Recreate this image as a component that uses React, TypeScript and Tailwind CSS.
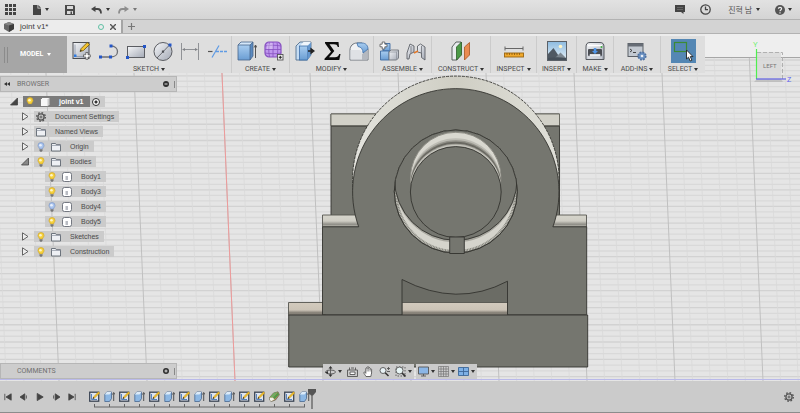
import React from "react";

const Caret = ({ color = "#333" }: { color?: string }) => (
  <svg width="4" height="3" viewBox="0 0 4 3" className="shrink-0">
    <path d="M0 0h4L2 3z" fill={color} />
  </svg>
);

/* ---------- toolbar icons ---------- */

const Defs = () => (
  <svg width="0" height="0" className="absolute">
    <defs>
      <linearGradient id="steel" x1="0" y1="0" x2="1" y2="1">
        <stop offset="0" stopColor="#f6f7f9" />
        <stop offset="1" stopColor="#a3a9b5" />
      </linearGradient>
      <linearGradient id="sky" x1="0" y1="0" x2="0" y2="1">
        <stop offset="0" stopColor="#a9cdf0" />
        <stop offset="1" stopColor="#6a9dd3" />
      </linearGradient>
      <linearGradient id="photo" x1="0" y1="0" x2="0" y2="1">
        <stop offset="0" stopColor="#8dbbe0" />
        <stop offset="1" stopColor="#e8f1f7" />
      </linearGradient>
    </defs>
  </svg>
);

const Icon = ({ size = 20, children }: { size?: number; children: React.ReactNode }) => (
  <svg width={size} height={size} viewBox="0 0 20 20" fill="none" className="shrink-0">
    {children}
  </svg>
);

const SketchIcon = () => (
  <Icon>
    <rect x="1" y="1.500" width="16" height="16" fill="url(#steel)" stroke="#4b4d52" />
    <path d="M3 3.500v12h12" stroke="#8a93a3" strokeWidth=".8" />
    <rect x="2" y="13.500" width="2.500" height="2.500" fill="#2f7be0" />
    <path d="M8 10.500 9.200 7.500l6-6 2.300 2-6 6z" fill="#f2c230" stroke="#6b5310" strokeWidth=".8" />
    <path d="m8 10.500.8-1.700 1 1z" fill="#222" />
    <path d="M13.800 11.500h2.200v2.300h2.300v2.200H16v2.300h-2.200V16h-2.300v-2.200h2.300z" fill="#fff" stroke="#555" strokeWidth=".8" />
  </Icon>
);

const LineArcIcon = () => (
  <Icon>
    <path d="M1 16h11c4 0 6.500-2.500 6.500-5.500S16 5 12 5" stroke="#6d6f73" strokeWidth="1.300" />
    <rect x="0" y="14.500" width="3" height="3" fill="#2456c7" />
    <rect x="10" y="14.500" width="3" height="3" fill="#2456c7" />
    <rect x="10.500" y="3.500" width="3" height="3" fill="#2456c7" />
  </Icon>
);

const RectIcon = () => (
  <Icon>
    <rect x="1.500" y="5.500" width="17" height="11" fill="url(#steel)" stroke="#5b5d62" />
    <rect x="0" y="15" width="3" height="3" fill="#2456c7" />
    <rect x="17" y="4" width="3" height="3" fill="#2456c7" />
  </Icon>
);

const CircleIcon = () => (
  <Icon>
    <circle cx="10" cy="10.500" r="9" fill="url(#steel)" stroke="#5b5d62" />
    <path d="M4 17 16.500 4" stroke="#5b5d62" strokeWidth=".9" />
    <rect x="8.900" y="9.500" width="2.200" height="2.200" fill="#4b4d52" />
    <rect x="15.500" y="2.500" width="3" height="3" fill="#2456c7" />
  </Icon>
);

const DimensionIcon = () => (
  <Icon>
    <path d="M1.500 2v17M18.500 2v17M3 8.500h14" stroke="#909296" />
    <path d="m2 8.500 3-1.500v3zM18 8.500l-3-1.500v3z" fill="#808286" />
  </Icon>
);

const TrimIcon = () => (
  <Icon>
    <path d="M1 10.500h4.500" stroke="#555" strokeWidth="1.200" />
    <path d="m5 16.500 7-12" stroke="#5f9be4" strokeWidth="1.200" />
    <path d="M9 10.500h11" stroke="#5f9be4" strokeWidth="1.400" strokeDasharray="3 1" />
  </Icon>
);

const ExtrudeIcon = () => (
  <Icon>
    <path d="m1 4 3-3h12v14l-3 4H1z" fill="#5a8ac0" />
    <path d="m1 4 3-3h12l-3 3z" fill="#d4e7f9" />
    <rect x="1" y="4" width="12" height="15" fill="url(#sky)" />
    <path d="m1 4 3-3h12v14l-3 4H1zh12l3-3M13 4v15" stroke="#46658a" strokeWidth=".8" />
    <path d="M18.500 17V5M17.200 6.500l1.300-2.500 1.300 2.500" stroke="#444" strokeWidth=".9" />
  </Icon>
);

const FormIcon = () => (
  <Icon>
    <path d="M1 5c0-2 2-4 4-4h8c2 0 4 2 4 4v7c0 2-2 4-4 4H5c-2 0-4-2-4-4z" fill="#bf97ee" stroke="#8750c0" strokeWidth="1.200" />
    <path d="M5.500 1.500C4.500 6 4.500 11 5.500 16M9 1v15M13 1.500c1 4.500 1 9.500 0 14M1 5c5-1 11-1 16 0M1 8.500h16M1 12c5 1 11 1 16 0" stroke="#8750c0" strokeWidth=".8" />
    <path d="M3 4c2-2 4-2 6-2v6H3z" fill="#fff" fillOpacity=".3" />
    <rect x="13.500" y="13.500" width="5.500" height="5.500" fill="#eee" stroke="#555" strokeWidth=".9" />
    <path d="M14.800 16.300h3M16.300 14.800v3" stroke="#222" />
  </Icon>
);

const PressPullIcon = () => (
  <Icon>
    <path d="m1 5 4-4h11v13l-4 5H1z" fill="#c5dcf3" stroke="#54708f" strokeWidth=".9" />
    <path d="m5 5 3.500-4H16l-4 4z" fill="#f0f6fc" />
    <rect x="4.500" y="5" width="8" height="14" fill="url(#sky)" stroke="#3d6ea8" strokeWidth=".8" />
    <path d="M12.500 5 16 1.500V14l-3.500 5z" fill="#6496cd" />
    <path d="M13 10h4M16 7.800l3 2.200-3 2.200z" stroke="#222" strokeWidth="1.300" fill="#222" />
  </Icon>
);

const SigmaIcon = () => (
  <Icon>
    <path d="M3 1h13.500l.5 5h-1.200c-.6-2.200-1.500-2.800-4-2.800H7.500L12.300 10 7 16.200h6c2.300 0 3.400-.8 4.200-3.200h1.300L17.300 19H2.500v-1.200L9 10.700 3 2.200z" fill="#0b0b0b" />
  </Icon>
);

const FilletIcon = () => (
  <Icon>
    <path d="M1 19V9c0-4 3-7 7-7h5l6 6v11z" fill="#f1f2f4" stroke="#6f747c" />
    <path d="M1.500 18.500V9H10c2 0 3 2 3 4v5.500z" fill="#dfe1e5" />
    <path d="M13 18.500V13l5.500-5v10.500z" fill="#b4b8bf" />
    <path d="M8 2h5c4 0 6 3 6 6l-5 4c0-4-2-6-5-6.500z" fill="url(#sky)" stroke="#3d6ea8" strokeWidth=".8" />
  </Icon>
);

const ComponentIcon = () => (
  <Icon>
    <path d="M4 2.500h7V10H4z" fill="url(#sky)" stroke="#3f6ca1" strokeWidth=".9" />
    <path d="M1.500 10h8.500v9H1.500z" fill="url(#sky)" stroke="#3f6ca1" strokeWidth=".9" />
    <path d="m10 11 2-2h7.500v8l-2 2H10z" fill="url(#steel)" stroke="#6f747c" strokeWidth=".9" />
    <path d="M10 11h7.500l2-2M17.500 11v8" stroke="#8a8f98" strokeWidth=".7" />
    <path d="M3.200 1h2.600v2.200H8v2.600H5.800V8H3.200V5.800H1V3.200h2.200z" fill="#fff" stroke="#555" strokeWidth=".8" />
  </Icon>
);

const JointIcon = () => (
  <Icon>
    <path d="M1 18V12l3-9 4 2v6l-4 2-1 5z" fill="url(#steel)" stroke="#5d6168" strokeWidth=".9" />
    <path d="m11.500 5 3-2L19 6v13l-3.500-2.500V12l-4-1z" fill="url(#steel)" stroke="#5d6168" strokeWidth=".9" />
    <path d="M5 5v7M15.500 5v7" stroke="#6c7077" strokeWidth=".8" />
    <path d="m8 12 4-2" stroke="#e4792a" strokeWidth="1.400" />
  </Icon>
);

const PlaneIcon = () => (
  <Icon>
    <path d="m1 6 4-5h5v12l-4 6H1z" fill="#e9ecef" stroke="#4d5552" strokeWidth=".9" />
    <path d="m5.500 6 5-5v13l-5 5z" fill="#4a9a46" stroke="#2c5f2a" strokeWidth=".8" />
    <path d="m13.500 6 5-4.500V14l-5 5z" fill="#e98b50" stroke="#a4541f" strokeWidth=".8" />
  </Icon>
);

const MeasureIcon = () => (
  <Icon>
    <path d="M1 7.500h18M1 5.500v4M19 5.500v4" stroke="#666" />
    <rect x=".5" y="12" width="19" height="4" fill="#f0a92d" stroke="#9a6511" strokeWidth=".9" />
    <path d="M3 12v2M5.500 12v2M8 12v2M10.500 12v2M13 12v2M15.500 12v2" stroke="#7b4f0a" strokeWidth=".7" />
  </Icon>
);

const PhotoIcon = () => (
  <Icon>
    <rect x=".5" y=".5" width="19" height="19" fill="url(#photo)" stroke="#5b6168" />
    <circle cx="13.500" cy="5.500" r="1.800" fill="#fff6c9" />
    <path d="m1 13 5.500-6 8 12H1z" fill="#4f5963" />
    <path d="m8 17 5.500-5.500L19 17v2H8z" fill="#7d8790" />
    <path d="M1 17c6-1 12-1 18 0v2H1z" fill="#46505a" />
  </Icon>
);

const PrintIcon = () => (
  <Icon>
    <path d="M1 6c0-3 1-4.500 4-4.500h10c3 0 4 1.500 4 4.500v12.500H1z" fill="url(#steel)" stroke="#55585e" />
    <path d="M3 4.500h14" stroke="#fff" strokeWidth="1.500" />
    <circle cx="16.500" cy="6" r="1" fill="#3fae3f" />
    <rect x="3" y="8" width="14" height="7" rx="1" fill="#4a4d53" />
    <path d="M8.800 7h2.500v3h1.700l-3 3-3-3h1.800z" fill="#4f94e6" />
    <path d="M5 13.500h10v1.500H5zM3 17h14" fill="#eceef1" stroke="#eceef1" strokeWidth=".8" />
  </Icon>
);

const ScriptIcon = () => (
  <Icon>
    <rect x="1" y="2.500" width="15" height="13" fill="#c3c9d1" stroke="#5b6067" />
    <path d="M1 2.500h15v3H1z" fill="#666c75" />
    <path d="m3 8 2 1.500L3 11M6 11.500h3" stroke="#333" strokeWidth=".9" />
    <circle cx="15" cy="15" r="3.700" fill="#6c93c4" stroke="#4f71a0" strokeWidth="1.800" strokeDasharray="1.800 1.100" />
    <circle cx="15" cy="15" r="1.300" fill="#e8eef6" />
  </Icon>
);

const SelectIcon = () => (
  <svg width="25" height="24" viewBox="0 0 25 24" fill="none" className="shrink-0">
    <rect x="3.500" y="3.500" width="12" height="9" stroke="#3c8b35" strokeWidth="1.200" />
    <path d="M15.500 11v9l2-1.800 1.700 3.800 1.700-.8-1.600-3.600h2.700z" fill="#fff" stroke="#222" strokeWidth=".9" />
  </svg>
);

const groups = [
  { label: "SKETCH", width: "w-[165px]", icons: [SketchIcon, LineArcIcon, RectIcon, CircleIcon, DimensionIcon, TrimIcon] },
  { label: "CREATE", width: "w-[58px]", icons: [ExtrudeIcon, FormIcon] },
  { label: "MODIFY", width: "w-[84px]", icons: [PressPullIcon, SigmaIcon, FilletIcon] },
  { label: "ASSEMBLE", width: "w-[58px]", icons: [ComponentIcon, JointIcon] },
  { label: "CONSTRUCT", width: "w-[59px]", icons: [PlaneIcon] },
  { label: "INSPECT", width: "w-[46px]", icons: [MeasureIcon] },
  { label: "INSERT", width: "w-[40px]", icons: [PhotoIcon] },
  { label: "MAKE", width: "w-[37px]", icons: [PrintIcon] },
  { label: "ADD-INS", width: "w-[47px]", icons: [ScriptIcon] },
];

const Toolbar = () => (
  <div className="flex h-[37px] w-max bg-[#dedede] font-[Roboto,sans-serif] text-[7px]">
    <button className="flex w-[67px] items-center gap-1 bg-[#a6a6a6] pl-1 font-bold text-white">
      <span className="h-4 w-1 border-x border-[#8b8b8b]" />
      <span className="ml-2">MODEL</span>
      <Caret color="#fff" />
    </button>
    {groups.map((g) => (
      <div key={g.label} className={`flex flex-col items-center border-r border-[#cbcbcb] pt-[3px] ${g.width}`}>
        <div className="flex h-6 items-center gap-[7px]">
          {g.icons.map((I, i) => (
            <button key={i} aria-label={`${g.label} ${i + 1}`}>
              <I />
            </button>
          ))}
        </div>
        <button className="mt-[2px] flex items-center gap-[2px] leading-[8px] text-[#4c4c4c]">
          {g.label}
          <Caret />
        </button>
      </div>
    ))}
    <div className="flex w-[44px] flex-col items-center pt-[3px]">
      <button aria-label="Select tool" className="h-6 bg-[#5487b4]">
        <SelectIcon />
      </button>
      <button className="mt-[2px] flex items-center gap-[2px] leading-[8px] text-[#4c4c4c]">
        SELECT
        <Caret />
      </button>
    </div>
  </div>
);

/* ---------- header ---------- */

const Header = () => (
  <header className="flex h-5 items-center justify-between border-b border-[#b2b2b2] bg-linear-to-b from-[#e2e2e2] to-[#d4d4d4] pl-[5px] pr-2">
    <div className="flex items-center gap-4">
      <button aria-label="Data panel">
        <svg width="11" height="11" viewBox="0 0 11 11" fill="#444">
          {[0, 4, 8].map((y) => [0, 4, 8].map((x) => <rect key={`${x}${y}`} x={x} y={y} width="3" height="3" />))}
        </svg>
      </button>
      <button aria-label="File" className="flex items-center gap-1">
        <svg width="9" height="10" viewBox="0 0 9 10" fill="#444">
          <path d="M1 0h4.500v3.500H9V10H1zM6.300 0 9 2.700H6.300z" />
        </svg>
        <Caret />
      </button>
      <button aria-label="Save">
        <svg width="10" height="10" viewBox="0 0 10 10">
          <path d="M0 0h9l1 1v9H0z" fill="#4a4a4a" />
          <path d="M2 1h6v3H2zM2 6h6v3H2z" fill="#dadada" />
          <path d="M5.500 6.500H7V9H5.500z" fill="#4a4a4a" />
        </svg>
      </button>
      <div className="flex items-center gap-2">
        <button aria-label="Undo" className="flex items-center gap-1">
          <svg width="11" height="8" viewBox="0 0 11 8" fill="none">
            <path d="M3 3h3.500C9 3 10 4.500 10 7.500" stroke="#444" strokeWidth="1.800" />
            <path d="M0 3 4.500 0v6z" fill="#444" />
          </svg>
          <Caret />
        </button>
        <button aria-label="Redo" className="flex items-center gap-1">
          <svg width="11" height="8" viewBox="0 0 11 8" fill="none">
            <path d="M8 3H4.500C2 3 1 4.500 1 7.500" stroke="#8d8d8d" strokeWidth="1.800" />
            <path d="M11 3 6.500 0v6z" fill="#8d8d8d" />
          </svg>
          <Caret color="#777" />
        </button>
      </div>
    </div>
    <div className="flex items-center gap-[15px]">
      <button aria-label="Feedback">
        <svg width="10" height="9" viewBox="0 0 10 9">
          <path d="M0 0h10v7H8.500v2L6 7H0z" fill="#444" />
          <path d="M2 2.500h6M2 4.500h6" stroke="#777" strokeWidth=".7" />
        </svg>
      </button>
      <button aria-label="Job status">
        <svg width="11" height="11" viewBox="0 0 11 11" fill="none" stroke="#444" strokeWidth="1.300">
          <circle cx="5.500" cy="5.500" r="4.700" />
          <path d="M5.500 2.500v3.200H8" />
        </svg>
      </button>
      <button className="ml-[2px] flex items-center gap-1 font-['Noto_Sans_CJK_KR',sans-serif] text-[8px] leading-[12px] text-[#555]">
        진혁 남
        <Caret />
      </button>
      <button aria-label="Help" className="flex items-center gap-[3px]">
        <svg width="10" height="10" viewBox="0 0 10 10" fill="none">
          <circle cx="5" cy="5" r="5" fill="#555" />
          <path d="M3.400 3.800c0-2 3.200-2 3.200 0C6.600 5 5 4.900 5 6.200M5 7.200v1.200" stroke="#eee" strokeWidth="1.200" />
        </svg>
        <Caret />
      </button>
    </div>
  </header>
);

const Tabs = () => (
  <nav className="flex h-[14px] border-b border-[#b2b2b2] bg-[#d3d3d3]">
    <div className="flex w-[123px] items-center border-r-2 border-[#a5a5a5] bg-[#ececec] pl-1 pr-[5px]">
      <svg width="10" height="10" viewBox="0 0 10 10">
        <path d="m0 2 5-2 5 2v5l-5 3-5-3z" fill="#666" />
        <path d="m0 2 5-2 5 2-5 1.500z" fill="#858585" />
        <path d="M5 3.500 10 2v5l-5 3z" fill="#3d3d3d" />
      </svg>
      <a href="#joint" className="ml-[6px] text-[8px] leading-[12px] text-[#3c3c3c]">
        joint v1*
      </a>
      <span className="ml-auto size-[6px] rounded-full border border-[#5fc0a4]" />
      <button aria-label="Close tab" className="ml-[6px]">
        <svg width="6" height="6" viewBox="0 0 6 6" stroke="#555" strokeWidth="1.400">
          <path d="m0 0 6 6M6 0 0 6" />
        </svg>
      </button>
    </div>
    <button aria-label="New tab" className="ml-[5px]">
      <svg width="7" height="7" viewBox="0 0 7 7" stroke="#777" strokeWidth="1.200">
        <path d="M3.500 0v7M0 3.500h7" />
      </svg>
    </button>
  </nav>
);

/* ---------- browser tree ---------- */

const Bulb = ({ off }: { off?: boolean }) => (
  <svg width="10" height="10" viewBox="0 0 10 10" className="shrink-0">
    <path d="M5 .5a3 3 0 0 1 3 3c0 1.500-1.300 2-1.500 3.500h-3C3.300 5.500 2 5 2 3.500a3 3 0 0 1 3-3z" fill={off ? "#a9c4ee" : "#f6d23c"} stroke={off ? "#7c97c4" : "#d0a52a"} strokeWidth=".7" />
    <circle cx="4.500" cy="3.300" r="1.300" fill="#fff" fillOpacity=".75" />
    <path d="M3.500 7.200h3v1.500L5.700 9.800H4.300l-.8-1.100z" fill="#777" />
  </svg>
);

const Folder = () => (
  <svg width="10" height="10" viewBox="0 0 10 10" className="shrink-0">
    <path d="M.5 1.500h4l.8 1.200h4.200V9H.5z" fill="#eef0f4" stroke="#5f6671" strokeWidth=".9" />
    <path d="M.5 3.500h9" stroke="#8c93a0" strokeWidth=".7" />
  </svg>
);

const BodyIcon = () => (
  <svg width="10" height="10" viewBox="0 0 10 10" className="shrink-0">
    <rect x=".5" y=".5" width="9" height="9" rx="2" fill="#fff" stroke="#666b75" strokeWidth=".9" />
    <path d="M3.500 4H6v4H3.500z" fill="#b9bcc3" />
  </svg>
);

const CubeIcon = () => (
  <svg width="10" height="10" viewBox="0 0 10 10" className="shrink-0">
    <path d="m.5 2.500 2-2h7v7l-2 2h-7z" fill="#f7f7f7" stroke="#555" strokeWidth=".6" />
    <path d="M7.500 9.500v-7l2-2v7z" fill="#c9c9c9" />
  </svg>
);

const Gear = () => (
  <svg width="10" height="10" viewBox="0 0 10 10" fill="none" stroke="#555" className="shrink-0">
    <circle cx="5" cy="5" r="3.100" strokeWidth="1.300" />
    <circle cx="5" cy="5" r="4.300" strokeWidth="1.400" strokeDasharray="1.600 1.777" />
    <circle cx="5" cy="5" r="1" strokeWidth=".9" />
  </svg>
);

const Arrow = ({ open, dark }: { open?: boolean; dark?: boolean }) => (
  <svg width="8" height="9" viewBox="0 0 8 9" className="shrink-0">
    {open ? (
      <path d="M7.500 1v7h-7z" fill={dark ? "#444" : "#888"} stroke="#444" strokeWidth=".8" />
    ) : (
      <path d="M1.500.8v7.400L7 4.500z" fill="#eee" stroke="#555" strokeWidth=".9" />
    )}
  </svg>
);

const rows = [
  { name: "Document Settings", icon: Gear },
  { name: "Named Views", icon: Folder },
  { name: "Origin", icon: Folder, bulb: "off" },
  { name: "Bodies", icon: Folder, bulb: "on", open: true },
  { name: "Body1", icon: BodyIcon, bulb: "on", leaf: true },
  { name: "Body3", icon: BodyIcon, bulb: "on", leaf: true },
  { name: "Body4", icon: BodyIcon, bulb: "off", leaf: true },
  { name: "Body5", icon: BodyIcon, bulb: "on", leaf: true },
  { name: "Sketches", icon: Folder, bulb: "on" },
  { name: "Construction", icon: Folder, bulb: "on" },
];

const PanelBar = ({ title, collapse, plus }: { title: string; collapse?: boolean; plus?: boolean }) => (
  <div className="flex h-4 w-[177px] items-center border border-[#b6b6b6] bg-[#cdcdcd] pr-px font-[Roboto,sans-serif] text-[7px] text-[#707070]">
    <span className="flex w-4 justify-center">
      {collapse && (
        <svg width="6" height="4" viewBox="0 0 6 4" fill="#333" className="-ml-1">
          <path d="M3 0v4L0 2zM6 0v4L3 2z" />
        </svg>
      )}
    </span>
    <span>{title}</span>
    <button aria-label={`${title} options`} className="ml-auto">
      <svg width="6" height="6" viewBox="0 0 6 6">
        <circle cx="3" cy="3" r="3" fill="#2e2e2e" />
        <path d={plus ? "M3 1.500v3M1.500 3h3" : "M1.500 3h3"} stroke="#ddd" strokeWidth="1" />
      </svg>
    </button>
    <span className="ml-1 h-[7px] w-[2px] border-r border-[#888]" />
  </div>
);

const Browser = () => (
  <aside className="mt-[3px] w-[177px]">
    <PanelBar title="BROWSER" collapse />
    <ul className="pt-[2px] text-[7px] leading-[11px] text-[#4a4a4a]">
      <li className="flex h-[15px] items-center pl-[10px]">
        <Arrow open dark />
        <div className="ml-[5px] flex h-[11px] items-center bg-[#cbcbcb]">
          <div className="flex h-full w-[67px] items-center bg-[#7b7b7b] pl-[2px]">
            <Bulb />
            <span className="ml-[5px] flex">
              <CubeIcon />
            </span>
            <span className="ml-[9px] font-bold text-white">joint v1</span>
          </div>
          <label className="flex pl-[2px] pr-[5px]">
            <input
              type="radio"
              defaultChecked
              aria-label="Activate joint v1"
              className="size-2 appearance-none rounded-full border border-[#333] bg-[radial-gradient(circle,#333_1px,#fff_2px)]"
            />
          </label>
        </div>
      </li>
      {rows.map((r) => {
        const I = r.icon;
        return (
          <li key={r.name} className={r.leaf ? "flex h-[15px] items-center pl-[45px]" : "flex h-[15px] items-center gap-[5px] pl-[21px]"}>
            {!r.leaf && <Arrow open={r.open} />}
            <div className="flex h-[11px] items-center gap-[5px] bg-[#cbcbcb] pl-[2px] pr-[5px]">
              {r.bulb && <Bulb off={r.bulb === "off"} />}
              <I />
              <span className="ml-1">{r.name}</span>
            </div>
          </li>
        );
      })}
    </ul>
  </aside>
);

/* ---------- 3D viewport ---------- */

const horizontals = Array.from({ length: 58 }, (_, i) => 60 + i * 5.3 + i * i * 0.0045);
const verticals = Array.from({ length: 49 }, (_, i) => i - 4);

const Scene = () => (
  <svg className="absolute inset-0 size-full" viewBox="0 34 800 347" preserveAspectRatio="xMidYMid slice">
    <defs>
      <linearGradient id="ledge" x1="0" y1="0" x2="0" y2="1">
        <stop offset="0" stopColor="#d6d5cc" />
        <stop offset=".5" stopColor="#cfcdc4" />
        <stop offset=".78" stopColor="#8f8e87" />
        <stop offset="1" stopColor="#c4c3ba" />
      </linearGradient>
      <linearGradient id="ledgeWarm" x1="0" y1="0" x2="0" y2="1">
        <stop offset="0" stopColor="#d3cbbe" />
        <stop offset=".6" stopColor="#cbc3b6" />
        <stop offset=".85" stopColor="#7b766d" />
        <stop offset="1" stopColor="#b5afa4" />
      </linearGradient>
      <linearGradient id="rim" x1="0" y1="0" x2="1" y2="0">
        <stop offset="0" stopColor="#e3e3dd" />
        <stop offset=".5" stopColor="#cfcec4" />
        <stop offset="1" stopColor="#e0e0d9" />
      </linearGradient>
      <clipPath id="pinBack">
        <circle cx="455.800" cy="177.500" r="45.200" />
      </clipPath>
      <clipPath id="bore">
        <circle cx="455.800" cy="191.500" r="61.500" />
      </clipPath>
    </defs>

    <rect y="34" width="800" height="347" fill="#e5e5e5" />
    <rect y="34" width="800" height="23" fill="#eeeeee" />
    {horizontals.map((y, i) => (
      <path key={i} d={`M0 ${y}H800`} stroke={i % 3 === 0 ? "#d2d2d2" : "#d9d9d9"} strokeWidth="1.300" />
    ))}
    {verticals.map((n) => (
      <path
        key={n}
        d={`M${45.3 + n * 17.6} 57L${59 + n * 17.6} 381`}
        stroke={n % 5 === 0 ? "#c0c0c0" : "#d9d9d9"}
        strokeWidth={n % 5 === 0 ? 1 : 0.8}
      />
    ))}
    <path d="M0 57.500H800" stroke="#a6a6a6" />
    <path d="M221.300 57 235 381" stroke="#ee9a9a" />
    <path d="M0 379.500H800" stroke="#b9b9ea" />

    <g stroke="#33332f" strokeWidth=".9" fill="#75766f">
      {/* rear block */}
      <path d="M331 114h228.500v102H331z" />
      <path d="M331 114h228.500v12H331z" fill="#d2d1c8" stroke="#66665f" />
      <path d="M331 126h228.500" />
      {/* ledges */}
      <path d="M322.500 215H362v12h-39.500zM550 215h36.500v12H550z" fill="url(#ledge)" stroke="#55554f" />
      <path d="M288.500 302.500H325V315h-36.500z" fill="url(#ledgeWarm)" stroke="#55554f" />
      <path d="M402 278h106v25H402z" fill="#6b6c65" stroke="none" />
      <path d="M402 302.500h106V315H402z" fill="url(#ledgeWarm)" stroke="#55554f" />
      {/* round housing */}
      <circle cx="455.800" cy="179.300" r="103.200" fill="url(#rim)" strokeDasharray="3 1" />
      <path d="M322.500 226.800h36.200A103.200 103.200 0 1 1 552.900 226.800h33.800V314.800H507.500V281.200Q457 308 402 279.500V314.800H322.500z" />
      {/* base */}
      <path d="M288.700 315h299v52h-299z" />
      {/* bore */}
      <circle cx="455.800" cy="191.500" r="61.500" fill="#d5d4cc" />
      <g clipPath="url(#bore)">
        <circle cx="455.800" cy="191.500" r="60" fill="none" stroke="#85857d" strokeWidth="3" strokeDasharray="1 .6" />
        <circle cx="455.800" cy="181" r="61.300" fill="#a9a8a0" stroke="none" />
        <circle cx="455.800" cy="179" r="61.300" />
      </g>
      <circle cx="455.800" cy="191.500" r="61.500" fill="none" />
      {/* pin */}
      <circle cx="455.800" cy="177.500" r="45.200" fill="#d9d8d0" stroke="#8b8a82" />
      <g clipPath="url(#pinBack)" stroke="none">
        <circle cx="455.800" cy="184" r="45.800" fill="#bdbcb4" />
        <circle cx="455.800" cy="186" r="45.800" fill="#94938b" />
        <circle cx="455.800" cy="187.500" r="45.800" fill="#6a6962" />
        <circle cx="455.800" cy="189.500" r="45.800" fill="#a3a29a" />
        <circle cx="455.800" cy="190.500" r="45.800" fill="#c6c5bd" />
      </g>
      <circle cx="455.800" cy="192" r="45.400" />
      <path d="M449.700 237h14.600v16.500h-14.600z" />
    </g>
  </svg>
);

const ViewCube = () => (
  <svg width="54" height="45" viewBox="0 0 54 45" fill="none" className="absolute right-0 top-[4px]">
    <rect x="10" y="14" width="25" height="27" fill="#d9d9d9" fillOpacity=".85" />
    <path d="M11 41h24l2 3H8z" fill="#999" fillOpacity=".4" />
    <path d="M11 14.500h25.500v26.500" stroke="#b0b0b0" strokeDasharray="4 2" />
    <path d="M10.500 11v30" stroke="#4fef4f" strokeWidth="1.200" />
    <path d="M10 41h30" stroke="#6161e6" strokeWidth="1.200" />
    <text x="7" y="9" className="fill-[#62ef62] text-[7px]">Y</text>
    <text x="41" y="44" className="fill-[#5c5cf0] text-[7px]">Z</text>
    <text x="17" y="30" className="fill-[#777] font-[Roboto,sans-serif] text-[6px]">LEFT</text>
  </svg>
);

/* ---------- bottom navigation ---------- */

const NavButton = ({ label, caret, children }: { label: string; caret?: boolean; children: React.ReactNode }) => (
  <button aria-label={label} className="flex items-center gap-[2px]">
    <svg width="11" height="11" viewBox="0 0 11 11" fill="none" stroke="#555" strokeWidth=".9">
      {children}
    </svg>
    {caret && <Caret />}
  </button>
);

const NavBar = () => (
  <div className="flex gap-[2px] justify-self-center">
    <div className="flex h-[15px] items-center gap-[5px] bg-[#cbcbcb] px-[2px]">
      <NavButton label="Orbit" caret>
        <ellipse cx="5.500" cy="6" rx="5" ry="2" />
        <path d="M5.500 1v9" />
        <path d="m5.500 0 2 2.500h-4zM5.500 11l2-2.500h-4zM0 6.500l3-1.500v3z" fill="#333" stroke="none" />
      </NavButton>
      <NavButton label="Look at">
        <path d="M.5 4h10v6.500H.5zM2.500 4V1.500M8.500 4V1.500M4 2h3" />
        <path d="M3 6h5v2.500H3z" fill="#fff" />
      </NavButton>
      <NavButton label="Pan">
        <path d="M3 10.500C2 8.500.8 7.500.8 6.500c.6-.8 1.400 0 2 .8V2.500c.3-.9 1.200-.9 1.400 0V1.300c.3-1 1.300-1 1.500 0v1c.3-.9 1.300-.8 1.500 0v1c.4-.7 1.300-.6 1.400.2V7c0 1.500-.8 2.200-.8 3.500z" fill="#fff" />
        <path d="M4.200 2.500v3M5.700 2v3.500M7.200 3v2.500" strokeWidth=".6" />
      </NavButton>
      <NavButton label="Zoom">
        <circle cx="4" cy="4.500" r="3" fill="#e8f2f5" />
        <path d="m6.200 6.700 3.300 3.300" stroke="#333" strokeWidth="1.600" />
        <path d="M8 2.500h3M9.500 1v3M8 5.500h3" />
      </NavButton>
      <NavButton label="Fit" caret>
        <path d="M1 1h9v9H1z" strokeDasharray="1.500 1.500" />
        <circle cx="4.500" cy="4.500" r="3.500" fill="#e8f5f5" />
        <path d="m7 7 3.500 3.500" stroke="#333" strokeWidth="1.700" />
      </NavButton>
    </div>
    <div className="flex h-[15px] items-center gap-[3px] bg-[#cbcbcb] px-[2px]">
      <NavButton label="Display settings" caret>
        <path d="M.5 1h10v7H.5z" fill="#8bb6e6" />
        <path d="M3 10h5M5.500 8v2" />
      </NavButton>
      <NavButton label="Grid settings" caret>
        <path d="M.5.5h10v10H.5zM3 .5v10M5.500.5v10M8 .5v10M.5 3h10M.5 5.500h10M.5 8h10" strokeWidth=".7" stroke="#777" />
      </NavButton>
      <NavButton label="Viewports" caret>
        <path d="M.5 1.500h10v8H.5z" fill="#7db0e6" stroke="#3c6699" />
        <path d="M5.500 1.500v8M.5 5.500h10" stroke="#3c6699" />
      </NavButton>
    </div>
  </div>
);

/* ---------- timeline ---------- */

const StepSketch = () => (
  <svg width="11" height="11" viewBox="0 0 11 11">
    <rect x=".7" y="1.200" width="9" height="9" fill="#dfe6f0" stroke="#3c4654" strokeWidth="1.300" />
    <path d="M2.500 3v5.500H8" fill="none" stroke="#4a78b8" strokeWidth=".9" />
    <path d="m4 7.500.8-2L9.500.8l1.300 1.200L6 6.800z" fill="#f0bd2c" stroke="#b58a20" strokeWidth=".4" />
    <path d="m3.500 8 .8-1.900 1.200 1.200z" fill="#222" />
  </svg>
);

const StepExtrude = () => (
  <svg width="11" height="11" viewBox="0 0 11 11">
    <path d="m.8 3.500 2-2.500h4.700v6.500l-2 3H.8z" fill="#8db8e4" stroke="#47688f" strokeWidth=".8" />
    <path d="m.8 3.500 2-2.500h4.700l-2 2.500z" fill="#dcebf9" />
    <path d="M9.700 10V2.500M8.500 3.500l1.200-2 1.200 2" fill="none" stroke="#333" strokeWidth=".8" />
  </svg>
);

const StepPlane = () => (
  <svg width="11" height="11" viewBox="0 0 11 11">
    <path d="M.6 6.500 4.500 2 9 .8l1.400 3L6.500 9l-4.300 1.500L.6 9z" fill="#c98a5b" stroke="#5d6650" strokeWidth=".7" />
    <path d="M.8 6.500 4.700 2 8.500 1 4 6.500z" fill="#6fae62" />
    <path d="M.8 6.700H4l1.500 1.500-3.200 2L.8 9z" fill="#eef2ea" />
    <path d="m4 6.500 5-5.300 1 2.300-4.500 4.700z" fill="#4f9a4b" />
  </svg>
);

const S = StepSketch;
const E = StepExtrude;
const steps = [S, E, S, E, S, E, S, E, S, E, S, S, StepPlane, S, E];

const playback = [
  { label: "Go to start", d: "M1 1v8M9 1v8L2.500 5z" },
  { label: "Step back", d: "M6 1v8L0 5zM8 3v4" },
  { label: "Play", d: "M1.500.5v9L9 5z" },
  { label: "Step forward", d: "M4 1v8l6-4zM2 3v4" },
  { label: "Go to end", d: "M9 1v8M1 1v8l6.500-4z" },
];

const Timeline = () => (
  <footer className="flex h-8 items-center border-b border-[#8c8c8c] bg-[#cbcbcb]">
    {playback.map((p) => (
      <button key={p.label} aria-label={p.label} className="flex w-4 justify-center">
        <svg width="8" height="8" viewBox="0 0 10 10" fill="#444" stroke="#444" strokeWidth="1">
          <path d={p.d} />
        </svg>
      </button>
    ))}
    <div className="ml-[7px] flex pt-1">
      <ol className="flex pt-[2px]">
        {steps.map((Step, i) => (
          <li key={i} className="flex w-[15px] flex-col items-center gap-[2px]">
            <Step />
            <svg width="15" height="4" viewBox="0 0 15 4" fill="none" stroke="#666">
              <path d={`M7.500 0v3M${i === 0 ? 7 : 0} 3H${i === steps.length - 1 ? 8 : 15}`} />
            </svg>
          </li>
        ))}
      </ol>
      <svg width="8" height="20" viewBox="0 0 8 20" className="-ml-1">
        <path d="M0 0h8v3L5 6.500H3L0 3z" fill="#555" />
        <path d="M4 5v15" stroke="#555" strokeWidth="1.200" />
      </svg>
    </div>
    <button aria-label="Timeline settings" className="ml-auto mr-[6px]">
      <Gear />
    </button>
  </footer>
);

const App = () => {
  return (
    <div className="flex min-h-screen flex-col overflow-hidden bg-[#e5e5e5] font-['Liberation_Sans',sans-serif]">
      <Defs />
      <Header />
      <Tabs />
      <main className="relative flex flex-1 flex-col">
        <Scene />
        <ViewCube />
        <div className="relative flex flex-1 flex-col pb-[2px]">
          <div className="w-max border-t-2 border-[#ececec]">
            <Toolbar />
          </div>
          <Browser />
          <div className="mt-auto grid grid-cols-[177px_1fr_177px] items-end">
            <PanelBar title="COMMENTS" plus />
            <NavBar />
          </div>
        </div>
      </main>
      <Timeline />
    </div>
  );
};

export default App;
